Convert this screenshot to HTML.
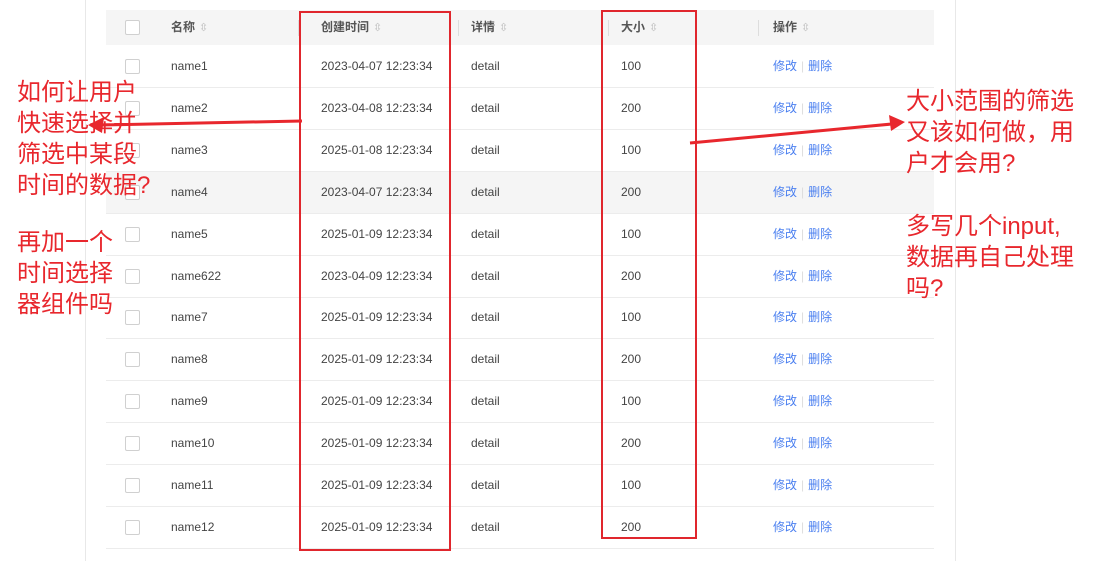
<!DOCTYPE html><html><head><meta charset="utf-8"><style>
body{margin:0;width:1098px;height:561px;background:#fff;position:relative;overflow:hidden;font-family:"Liberation Sans","Noto Sans CJK SC",sans-serif;}
.vl{position:absolute;top:0;bottom:0;width:1px;background:#e8e8e8}
.hdr{position:absolute;left:106px;top:10px;width:828px;height:35px;background:#f5f5f5}
.row{position:absolute;left:106px;width:828px;height:41px;border-bottom:1px solid #ececec}
.c{position:absolute;top:0;line-height:41px;font-size:12px;color:#444;white-space:nowrap}
.h{line-height:35px;font-weight:bold;color:#555}
.cb{position:absolute;left:19px;top:13px;width:13px;height:13px;border:1px solid #d0d0d0;border-radius:2px;background:#fff}
.sep{position:absolute;top:10px;width:1px;height:16px;background:#ddd}
.s{color:#bbb;font-weight:normal;font-size:11px;margin-left:4px}
.a{color:#4a7ff0}
.red{position:absolute;color:#e8272d;font-size:24px;line-height:31px;font-family:"Liberation Sans","Noto Sans CJK SC",sans-serif}
.box{position:absolute;border:2px solid #e0262d}
</style></head><body>
<div class="vl" style="left:85px"></div><div class="vl" style="left:955px"></div>
<div class="hdr">
<div class="cb" style="top:10px"></div>
<div class="c h" style="left:65px">名称<span class="s">⇳</span></div>
<div class="sep" style="left:192px"></div>
<div class="c h" style="left:215px">创建时间<span class="s">⇳</span></div>
<div class="sep" style="left:352px"></div>
<div class="c h" style="left:365px">详情<span class="s">⇳</span></div>
<div class="sep" style="left:502px"></div>
<div class="c h" style="left:515px">大小<span class="s">⇳</span></div>
<div class="sep" style="left:652px"></div>
<div class="c h" style="left:667px">操作<span class="s">⇳</span></div>
</div>
<div id="rows"></div>
<script>
var d=[["name1","2023-04-07",100],["name2","2023-04-08",200],["name3","2025-01-08",100],["name4","2023-04-07",200],["name5","2025-01-09",100],["name622","2023-04-09",200],["name7","2025-01-09",100],["name8","2025-01-09",200],["name9","2025-01-09",100],["name10","2025-01-09",200],["name11","2025-01-09",100],["name12","2025-01-09",200]];
var h="";d.forEach(function(r,i){var t=46+i*41.9;h+='<div class="row" style="top:'+t+'px;'+(i==3?'background:#f5f5f5':'')+'"><div class="cb"></div><div class="c" style="left:65px">'+r[0]+'</div><div class="c" style="left:215px">'+r[1]+' 12:23:34</div><div class="c" style="left:365px">detail</div><div class="c" style="left:515px">'+r[2]+'</div><div class="c" style="left:667px"><span class="a">修改</span><span style="color:#ddd;margin:0 4px">|</span><span class="a">删除</span></div></div>';});
document.getElementById("rows").innerHTML=h;
</script>
<div class="box" style="left:299px;top:11px;width:148px;height:536px"></div>
<div class="box" style="left:601px;top:10px;width:92px;height:525px"></div>
<div class="red" style="left:17px;top:77px">如何让用户<br>快速选择并<br>筛选中某段<br>时间的数据?</div>
<div class="red" style="left:17px;top:227px">再加一个<br>时间选择<br>器组件吗</div>
<div class="red" style="left:906px;top:86px">大小范围的筛选<br>又该如何做，用<br>户才会用?</div>
<div class="red" style="left:906px;top:211px">多写几个input,<br>数据再自己处理<br>吗?</div>
<svg style="position:absolute;left:0;top:0" width="1098" height="561">
<line x1="302" y1="121" x2="100" y2="125" stroke="#e8272d" stroke-width="3"/>
<polygon points="88,125 104,117 102,133" fill="#e8272d"/>
<line x1="690" y1="143" x2="892" y2="124" stroke="#e8272d" stroke-width="3"/>
<polygon points="905,122 889,115 891,131" fill="#e8272d"/>
</svg>
</body></html>
